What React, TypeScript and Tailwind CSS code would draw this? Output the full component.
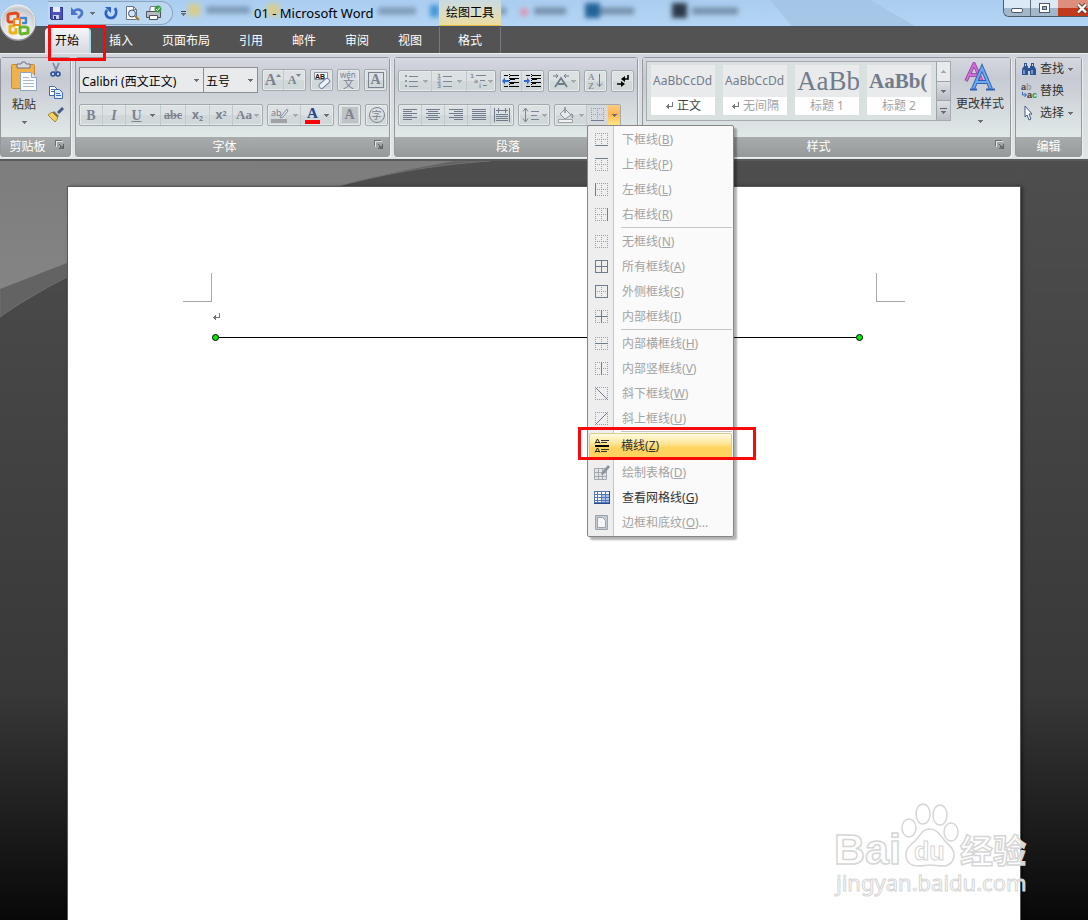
import type { ReactNode } from 'react'
import clsx from 'clsx'

type IconProps = { children: ReactNode; w?: number; h?: number }

function Icon({ children, w = 16, h = 16 }: IconProps) {
  return (
    <svg
      width={w}
      height={h}
      viewBox={`0 0 ${w} ${h}`}
      fill="none"
      shapeRendering="crispEdges"
      className="shrink-0"
      aria-hidden="true"
    >
      {children}
    </svg>
  )
}

function Caret({ light = false }: { light?: boolean }) {
  return (
    <Icon w={5} h={3}>
      <path d="M0 0h5v1H4v1H3v1H2V2H1V1H0z" fill={light ? '#a4a9ad' : '#6b6f74'} />
    </Icon>
  )
}

/* ---------- title bar ---------- */

function OfficeButton() {
  return (
    <button aria-label="Office" className="absolute left-0 top-1 z-10 cursor-pointer">
      <svg width="38" height="38" viewBox="0 0 38 38" fill="none">
        <defs>
          <radialGradient id="orb" cx="0.5" cy="0.75" r="0.8">
            <stop offset="0" stopColor="#ffffff" />
            <stop offset="0.5" stopColor="#e2e4e6" />
            <stop offset="0.8" stopColor="#c3c6ca" />
            <stop offset="1" stopColor="#f4f5f6" />
          </radialGradient>
        </defs>
        <circle cx="18" cy="19" r="18" fill="#8d9196" />
        <circle cx="18" cy="18" r="17" fill="url(#orb)" stroke="#f5f6f7" />
        <g strokeLinejoin="round">
          <path d="M18 14v-4l-2-1-7 1-1 1v6l1 1h4" stroke="#e04a1c" strokeWidth="3" />
          <path d="M20 14h6v5h-4" stroke="#3f86d8" strokeWidth="2.400" />
          <path d="M15 22h-5v6l1 1h5v-5" stroke="#eeb21a" strokeWidth="3" />
          <path d="M20 23h6l2 1v5l-7 1-1-1z" stroke="#69b52c" strokeWidth="3" />
          <path d="M14 15h6v6h-6z" stroke="#f08a1f" strokeWidth="2" />
        </g>
      </svg>
    </button>
  )
}

// Blurred remains of the window that lies behind the glass title bar
function GlassBackdrop() {
  return (
    <svg className="absolute inset-0 h-full w-full" aria-hidden="true">
      <defs>
        <filter id="glass" x="-20%" y="-60%" width="140%" height="220%">
          <feGaussianBlur stdDeviation="2.6" />
        </filter>
      </defs>
      <path d="M770 0h100l45 26H792z" fill="#9fc0de" opacity="0.65" />
      <g filter="url(#glass)">
        <rect x="188" y="4" width="12" height="12" fill="#d8cd8a" />
        <path d="M206 10h44M378 11h38" stroke="#5d7690" strokeWidth="7" opacity="0.6" />
        <rect x="267" y="4" width="12" height="12" fill="#d8cd8a" />
        <rect x="430" y="5" width="9" height="12" fill="#3f95d6" />
        <path d="M500 11h6M534 11h32M594 11h40M692 11h46" stroke="#4d657e" strokeWidth="7" opacity="0.6" />
        <circle cx="524" cy="12" r="4" fill="#dd93ad" />
        <rect x="585" y="3" width="15" height="15" fill="#20639a" />
        <rect x="672" y="3" width="15" height="15" fill="#2c3946" />
      </g>
    </svg>
  )
}

function SaveIcon() {
  return (
    <Icon>
      <path d="M2 2h12v12H3l-1-1z" fill="#4a53b8" stroke="#30378f" />
      <path d="M5 2h7v5H5z" fill="#e8edf9" />
      <path d="M5 10h6v4H5z" fill="#c9d0ec" />
      <path d="M6 11h2v3H6z" fill="#30378f" />
    </Icon>
  )
}

function QuickAccess() {
  return (
    <div className="relative flex w-[254px] items-center pl-12">
      <div className="flex h-6 w-[125px] items-center rounded-r-full border border-l-0 border-[#8fa3b8] bg-[#c5dcf2]/60">
        <button aria-label="保存" className="cursor-pointer">
          <SaveIcon />
        </button>
        <button aria-label="撤消" className="ml-1 cursor-pointer">
          <svg width="18" height="16" viewBox="0 0 18 16" fill="none">
            <path d="M6 6c4-3 8-1 8 2 0 3-3 4-4 5" stroke="#4a74c9" strokeWidth="2.600" />
            <path d="M3 2v8h7z" fill="#4a74c9" />
          </svg>
        </button>
        <button aria-label="撤消选项" className="ml-1 cursor-pointer">
          <Caret />
        </button>
        <button aria-label="恢复" className="ml-2 cursor-pointer">
          <svg width="16" height="16" viewBox="0 0 16 16" fill="none">
            <path d="M12 3c3 5 0 10-4 10s-7-4-4-8" stroke="#2f64c4" strokeWidth="2.600" />
            <path d="M2 2h6v6z" fill="#2f64c4" />
          </svg>
        </button>
        <button aria-label="打印预览" className="ml-1 cursor-pointer">
          <svg width="18" height="16" viewBox="0 0 18 16" fill="none">
            <path d="M3.500 1.500h7l3 3v10h-10z" fill="#fff" stroke="#66748a" />
            <path d="M10.500 1.500v3h3" stroke="#66748a" />
            <circle cx="9" cy="8.500" r="3.500" fill="#cfe4f7" stroke="#3d4d66" />
            <path d="M12 11l4 4" stroke="#a8772f" strokeWidth="2" />
          </svg>
        </button>
        <button aria-label="快速打印" className="ml-1 cursor-pointer">
          <svg width="18" height="16" viewBox="0 0 18 16" fill="none">
            <path d="M5.500 1.500h8l-1 5h-8z" fill="#fff" stroke="#777" />
            <path d="M1.500 6.500h14v6h-14z" fill="#b9bdc4" stroke="#4d525b" />
            <path d="M4.500 10.500h8v4h-8z" fill="#fff" stroke="#4d525b" />
            <circle cx="13" cy="4" r="3.500" fill="#3c9f45" />
            <path d="M11 4l1.500 1.500L15 2.500" stroke="#fff" />
          </svg>
        </button>
      </div>
      <button aria-label="自定义快速访问工具栏" className="ml-2 flex cursor-pointer flex-col items-center gap-px">
        <span className="h-px w-[5px] bg-[#3b4450]" />
        <Caret />
      </button>
    </div>
  )
}

function WindowControls() {
  return (
    <div className="relative flex h-[17px] shrink-0 overflow-hidden rounded-bl-md border-b border-l border-[#4d5b6b]">
      <button
        aria-label="最小化"
        className="flex w-[27px] items-center justify-center border-r border-[#5c6d80] bg-linear-to-b from-[#dbe8f5] from-50% to-[#a3b7cb] to-50% cursor-pointer"
      >
        <span className="mt-1 h-[5px] w-3 rounded-xs border border-[#4c5866] bg-white" />
      </button>
      <button
        aria-label="最大化"
        className="flex w-[27px] items-center justify-center bg-linear-to-b from-[#dbe8f5] from-50% to-[#a3b7cb] to-50% cursor-pointer"
      >
        <Icon w={11} h={10}>
          <path d="M.5.5h10v9H.5z" fill="#fff" stroke="#4c5866" />
          <path d="M3.500 3.500h4v3h-4z" fill="#8fb5dc" stroke="#4c5866" />
        </Icon>
      </button>
      <button
        aria-label="关闭"
        className="flex w-[30px] items-center justify-end bg-linear-to-b from-[#dd8e7d] from-50% to-[#c23a1e] to-50% cursor-pointer"
      >
        <svg width="12" height="11" viewBox="0 0 12 11">
          <path d="M2 1.500l8 8M10 1.500l-8 8" stroke="#5b3a3a" strokeWidth="4" />
          <path d="M2 1.500l8 8M10 1.500l-8 8" stroke="#fff" strokeWidth="2.400" />
        </svg>
      </button>
    </div>
  )
}

function TitleBar() {
  return (
    <header className="relative flex h-[27px] border-b border-[#42536a] bg-linear-to-b from-[#aacdf0] to-[#b4d5f4]">
      <GlassBackdrop />
      <QuickAccess />
      <h1 className="relative w-[185px] text-[13px] leading-[26px] whitespace-nowrap text-black">
        01 - Microsoft Word
      </h1>
      <div className="relative w-[62px] border-b border-[#e3b93e] bg-linear-to-b from-[#c9dae3] to-[#ecdd9f] text-center text-[12px] leading-[26px] text-black">
        绘图工具
      </div>
      <div className="flex-1" />
      <WindowControls />
    </header>
  )
}

/* ---------- ribbon tabs ---------- */

const tabs = ['插入', '页面布局', '引用', '邮件', '审阅', '视图']

function RibbonTabs() {
  return (
    <nav className="flex h-[26px] items-end gap-px bg-[#535353] pl-[45px] text-[12px] leading-[25px] text-white">
      <div className="relative mr-[3px]">
        <button className="h-[25px] w-[46px] rounded-t-sm border-r-2 border-[#a5dfe6] bg-linear-to-b from-[#f4f6f7] to-[#d5d8e0] text-black cursor-pointer">
          开始
        </button>
        <span className="pointer-events-none absolute -top-[3px] left-[3px] z-20 h-[36px] w-[58px] border-[3px] border-[#f80a0a]" />
      </div>
      {tabs.map((tab) => (
        <button key={tab} className="h-[26px] px-[14px] cursor-pointer">
          {tab}
        </button>
      ))}
      <button className="ml-0.5 h-[26px] w-[62px] border-x border-[#76797f] cursor-pointer">格式</button>
    </nav>
  )
}

/* ---------- ribbon building blocks ---------- */

function Group({
  label,
  launcher = false,
  className,
  children
}: {
  label: string
  launcher?: boolean
  className?: string
  children: ReactNode
}) {
  return (
    <section
      className={clsx(
        'flex h-[100px] flex-col rounded-[3px] border border-[#94989d] shadow-[1px_1px_0_#eef1f1,-1px_0_0_#dfe3e5]',
        className
      )}
    >
      <div className="flex h-[79px] bg-linear-to-b from-[#d6d8e0] via-[#c6cad3] via-25% to-[#e1e9e8]">{children}</div>
      <div className="flex h-[19px] items-center bg-linear-to-b from-[#a9acac] to-[#979a9a]">
        <h2 className="flex-1 text-center text-[12px] leading-[18px] text-white">{label}</h2>
        {launcher && (
          <button aria-label={`${label}选项`} className="mr-1 mb-1 cursor-pointer">
            <Icon w={12} h={10}>
              <path d="M2.500 7V1.500H9" stroke="#e2e5e5" />
              <path d="M1.500 6V.5H8" stroke="#6b6f73" />
              <path d="M5 4l3 3M5 8.500h4.500V4" stroke="#5d6166" />
              <path d="M6 6h3v3H6z" fill="#6b6f73" />
            </Icon>
          </button>
        )}
      </div>
    </section>
  )
}

function Cluster({ children }: { children: ReactNode }) {
  return (
    <div className="flex h-[22px] divide-x divide-[#c3cacd] rounded-xs border border-[#a2aaae] bg-linear-to-b from-[#dce1e4] from-50% to-[#d0d8da] to-50% shadow-[inset_0_0_0_1px_#e6ecec]">
      {children}
    </div>
  )
}

function Tool({ label, className, children }: { label: string; className: string; children: ReactNode }) {
  return (
    <button
      aria-label={label}
      title={label}
      className={clsx('flex h-full shrink-0 items-center justify-center text-[#7b838f] cursor-pointer', className)}
    >
      {children}
    </button>
  )
}

const serif = "font-['Liberation_Serif',serif] font-bold"

/* ---------- clipboard ---------- */

function PasteIcon() {
  return (
    <svg width="28" height="32" viewBox="0 0 28 32" fill="none">
      <rect x="1.500" y="3.500" width="23" height="24" rx="1" fill="#eeb24c" stroke="#c98a2c" />
      <path d="M7 7V3h4l1-2h3l1 2h4v4z" fill="#d5d8de" stroke="#6f7480" />
      <path d="M10.500 11.500h11l5 5v13h-16z" fill="#fbfcff" stroke="#8fa3c4" />
      <path d="M21.500 11.500v5h5" fill="#dce5f4" stroke="#8fa3c4" />
      <path d="M13 19.500h11M13 22.500h11M13 25.500h11M13 16.500h6" stroke="#a7b7d4" />
    </svg>
  )
}

function ClipboardGroup() {
  return (
    <Group label="剪贴板" launcher className="w-[71px]">
      <button className="flex w-[46px] flex-col items-center pt-[3px] text-[12px] text-[#333] cursor-pointer">
        <PasteIcon />
        <span className="mt-1 leading-4">粘贴</span>
        <span className="mt-2">
          <Caret />
        </span>
      </button>
      <div className="flex flex-col gap-1 pt-1">
        <button aria-label="剪切" className="cursor-pointer">
          <svg width="18" height="18" viewBox="0 0 18 18" fill="none">
            <path d="M6 1l4 9M12 1L8 10" stroke="#7c8ba3" strokeWidth="1.800" />
            <circle cx="6" cy="12" r="2" stroke="#2b4f9b" strokeWidth="1.600" />
            <circle cx="11" cy="12" r="2" stroke="#2b4f9b" strokeWidth="1.600" />
          </svg>
        </button>
        <button aria-label="复制" className="cursor-pointer">
          <svg width="18" height="18" viewBox="0 0 18 18" fill="none">
            <path d="M2.500 2.500h5l3 3v6h-8z" fill="#fff" stroke="#3d6bb5" />
            <path d="M7.500 5.500h5l3 3v6h-8z" fill="#e2ecfb" stroke="#3d6bb5" />
            <path d="M9 9.500h4M9 11.500h5M4 5.500h3M4 7.500h3" stroke="#3d6bb5" />
          </svg>
        </button>
        <button aria-label="格式刷" className="cursor-pointer">
          <svg width="18" height="18" viewBox="0 0 18 18" fill="none">
            <path d="M16 2l-5 5" stroke="#4a5a86" strokeWidth="3" />
            <path d="M7 5l5 5-2 2-5-5z" fill="#7a6f55" />
            <path d="M5 6l6 6-3 4L1 9z" fill="#f0d264" stroke="#a98a2c" />
          </svg>
        </button>
      </div>
    </Group>
  )
}

/* ---------- font ---------- */

function Combo({ label, value, className }: { label: string; value: string; className: string }) {
  return (
    <div className={clsx('relative h-[26px] border border-[#8b8f93] bg-[#e9eaec]', className)}>
      <select
        aria-label={label}
        className="h-6 w-full appearance-none bg-transparent pl-0.5 text-[12px] leading-6 text-black outline-none"
      >
        <option>{value}</option>
      </select>
      <span className="pointer-events-none absolute inset-y-0 right-1 flex items-center">
        <Caret />
      </span>
    </div>
  )
}

function FontGroup() {
  return (
    <Group label="字体" launcher className="w-[315px]">
      <div className="flex flex-col gap-3 pt-2.5 pl-[3px]">
        <div className="flex h-[24px] items-center">
          <Combo label="字体" value="Calibri (西文正文)" className="w-[125px]" />
          <Combo label="字号" value="五号" className="w-[54px] border-l-0" />
          <div className="ml-1 flex gap-1">
            <Cluster>
              <Tool label="增大字体" className="w-[21px]">
                <span className={clsx(serif, 'text-[16px] leading-5')}>A</span>
                <svg width="5" height="12" viewBox="0 0 5 12">
                  <path d="M0 3h5L2.500 0z" fill="currentColor" />
                </svg>
              </Tool>
              <Tool label="缩小字体" className="w-[21px]">
                <span className={clsx(serif, 'text-[12px] leading-5')}>A</span>
                <svg width="5" height="12" viewBox="0 0 5 12">
                  <path d="M0 0h5L2.500 3z" fill="currentColor" />
                </svg>
              </Tool>
            </Cluster>
            <Cluster>
              <Tool label="清除格式" className="w-[21px]">
                <svg width="18" height="18" viewBox="0 0 18 18" fill="none">
                  <path d="M1.500 1.500h13v7h-13z" fill="#f6f8fb" stroke="#8b93a3" />
                  <text x="2" y="8" fontSize="7" fontWeight="700" fontFamily="Liberation Sans" fill="#111">
                    AB
                  </text>
                  <rect x="5" y="10" width="12" height="5" rx="2" transform="rotate(-42 11 12)" fill="#eef2fa" stroke="#6a7ea8" />
                </svg>
              </Tool>
            </Cluster>
            <Cluster>
              <Tool label="拼音指南" className="w-[21px]">
                <svg
                  width="19"
                  height="20"
                  viewBox="0 0 19 20"
                  fill="currentColor"
                  fontFamily="Noto Sans, Noto Sans CJK SC"
                  className="overflow-visible"
                >
                  <text x="1" y="8" fontSize="8">
                    wén
                  </text>
                  <text x="4" y="18" fontSize="11">
                    文
                  </text>
                </svg>
              </Tool>
            </Cluster>
            <Cluster>
              <Tool label="字符边框" className="w-[21px]">
                <span className={clsx(serif, 'h-4 w-4 border border-current text-center text-[14px] leading-[14px]')}>
                  A
                </span>
              </Tool>
            </Cluster>
          </div>
        </div>
        <div className="flex gap-1">
          <Cluster>
            <Tool label="加粗" className="w-[23px]">
              <span className={clsx(serif, 'text-[14px]')}>B</span>
            </Tool>
            <Tool label="倾斜" className="w-[23px]">
              <span className={clsx(serif, 'text-[14px] italic')}>I</span>
            </Tool>
            <Tool label="下划线" className="w-[35px] gap-2">
              <span className={clsx(serif, 'text-[14px] underline')}>U</span>
              <Caret />
            </Tool>
            <Tool label="删除线" className="w-[25px]">
              <span className={clsx(serif, 'text-[12px] line-through')}>abc</span>
            </Tool>
            <Tool label="下标" className="w-[24px]">
              <span className="text-[12px] font-bold">
                x<sub className="text-[7px]">2</sub>
              </span>
            </Tool>
            <Tool label="上标" className="w-[23px]">
              <span className="text-[12px] font-bold">
                x<sup className="text-[7px]">2</sup>
              </span>
            </Tool>
            <Tool label="更改大小写" className="w-[29px] gap-0.5">
              <span className={clsx(serif, 'text-[13px]')}>Aa</span>
              <Caret light />
            </Tool>
          </Cluster>
          <Cluster>
            <Tool label="突出显示" className="w-[33px] gap-1">
              <svg width="18" height="18" viewBox="0 0 18 18" fill="none">
                <text x="0" y="10" fontSize="9" fontFamily="Noto Sans" fill="currentColor">
                  ab
                </text>
                <path d="M16 3l-6 7-1 2 3-1 5-6z" fill="#e0e3e6" stroke="#8b93a0" />
                <path d="M0 13h16v4H0z" fill="#a0a3a6" />
              </svg>
              <Caret light />
            </Tool>
            <Tool label="字体颜色" className="w-[32px] gap-1">
              <span className={clsx(serif, 'border-b-4 border-[#f00] px-0.5 text-[15px] leading-[13px] text-[#27468a]')}>
                A
              </span>
              <Caret />
            </Tool>
          </Cluster>
          <Cluster>
            <Tool label="字符底纹" className="w-[21px]">
              <span className={clsx(serif, 'h-4 w-4 bg-[#bfc3c6] text-center text-[14px] leading-4')}>A</span>
            </Tool>
          </Cluster>
          <Cluster>
            <Tool label="带圈字符" className="w-[21px]">
              <span className="h-4 w-4 rounded-full border border-current text-center text-[10px] leading-[14px]">字</span>
            </Tool>
          </Cluster>
        </div>
      </div>
    </Group>
  )
}

/* ---------- border menu ---------- */

const grid = '#9aa0a8'
const ink = '#6f7b8f'

function BorderIcon({ lines, frame = true }: { lines?: string; frame?: boolean }) {
  return (
    <Icon>
      {frame && (
        <path d="M1 1.500h13M1 7.500h13M1 13.500h13M1.500 1v13M7.500 1v13M13.500 1v13" stroke={grid} strokeDasharray="1 1" />
      )}
      {lines && <path d={lines} stroke={ink} />}
    </Icon>
  )
}

// Only the outer box is dotted: a diagonal runs through the cell
function DiagonalIcon({ d }: { d: string }) {
  return (
    <svg width="16" height="16" viewBox="0 0 16 16" fill="none">
      <path
        d="M1 1.500h13M1 13.500h13M1.500 1v13M13.500 1v13"
        stroke={grid}
        strokeDasharray="1 1"
        shapeRendering="crispEdges"
      />
      <path d={d} stroke={ink} />
    </svg>
  )
}

function HorizontalLineIcon() {
  return (
    <svg width="16" height="16" viewBox="0 0 16 16" fill="none">
      <path d="M1 8h14" stroke="#000" strokeWidth="2" shapeRendering="crispEdges" />
      <path d="M7 2.500h8M7 4.500h6M7 11.500h8M7 13.500h6" stroke="#333" shapeRendering="crispEdges" />
      <path d="M1 5.500L3.500 1 6 5.500M2 4.500h3M1 14.500L3.500 10 6 14.500M2 13.500h3" stroke="#222" />
    </svg>
  )
}

function DrawTableIcon() {
  return (
    <svg width="18" height="18" viewBox="0 0 18 18" fill="none">
      <path d="M1.500 4.500h12v11h-12zM1.500 8.500h12M1.500 12.500h12M5.500 4.500v11M9.500 4.500v11" fill="#e3e5e7" stroke="#a2a8ae" />
      <path d="M15 1l2 2-6 7-3 1 1-3z" fill="#8d949c" />
    </svg>
  )
}

function GridlinesIcon() {
  return (
    <Icon w={18} h={18}>
      <path d="M1 2h16v12H1z" fill="#fff" />
      <path d="M8 5h8v8H8z" fill="#a9c5ec" />
      <path d="M1.500 2.500h15v11h-15zM1 5.500h15M1 8.500h15M1 11.500h15M4.500 2v12M8.500 2v12M12.500 2v12" stroke="#5378b5" />
      <path d="M1 14.500h16M16.500 2v13" stroke="#274b8c" />
    </Icon>
  )
}

function ShadingPageIcon() {
  return (
    <svg width="18" height="18" viewBox="0 0 18 18" fill="none">
      <path d="M2.500 1.500h12v14h-12z" fill="#c4cad1" stroke="#9ba3ad" />
      <path d="M4.500 3.500h5l3 3v7h-8z" fill="#f4f5f6" stroke="#9ba3ad" />
    </svg>
  )
}

type MenuItem = { text: string; accel: string; tail?: string; icon: ReactNode; enabled?: boolean; hot?: boolean }

const menuSections: MenuItem[][] = [
  [
    { text: '下框线', accel: 'B', icon: <BorderIcon lines="M1 13.500h13" /> },
    { text: '上框线', accel: 'P', icon: <BorderIcon lines="M1 1.500h13" /> },
    { text: '左框线', accel: 'L', icon: <BorderIcon lines="M1.500 1v13" /> },
    { text: '右框线', accel: 'R', icon: <BorderIcon lines="M13.500 1v13" /> }
  ],
  [
    { text: '无框线', accel: 'N', icon: <BorderIcon /> },
    {
      text: '所有框线',
      accel: 'A',
      icon: <BorderIcon frame={false} lines="M1.500 1.500h12v12h-12zM1 7.500h13M7.500 1v13" />
    },
    { text: '外侧框线', accel: 'S', icon: <BorderIcon lines="M1.500 1.500h12v12h-12z" /> },
    { text: '内部框线', accel: 'I', icon: <BorderIcon lines="M1 7.500h13M7.500 1v13" /> }
  ],
  [
    { text: '内部横框线', accel: 'H', icon: <BorderIcon lines="M1 7.500h13" /> },
    { text: '内部竖框线', accel: 'V', icon: <BorderIcon lines="M7.500 1v13" /> },
    { text: '斜下框线', accel: 'W', icon: <DiagonalIcon d="M1.500 1.500l12 12" /> },
    { text: '斜上框线', accel: 'U', icon: <DiagonalIcon d="M13.500 1.500l-12 12" /> }
  ],
  [{ text: '横线', accel: 'Z', icon: <HorizontalLineIcon />, enabled: true, hot: true }],
  [
    { text: '绘制表格', accel: 'D', icon: <DrawTableIcon /> },
    { text: '查看网格线', accel: 'G', icon: <GridlinesIcon />, enabled: true },
    { text: '边框和底纹', accel: 'O', tail: '...', icon: <ShadingPageIcon /> }
  ]
]

function BorderMenu() {
  return (
    <div
      role="menu"
      className="absolute top-full left-0 z-30 w-[147px] rounded-xs border border-[#868686] bg-[linear-gradient(to_right,#eeeeef_25px,#c5c5c5_25px,#c5c5c5_26px,#fafafa_26px)] p-px shadow-[3px_3px_2px_rgba(0,0,0,0.3)]"
    >
      {menuSections.map((items, i) => (
        <div key={i}>
          {i > 0 && (
            <div className="flex h-0.5">
              <span className="w-[32px]" />
              <span className="h-px flex-1 bg-[#c5c5c5]" />
            </div>
          )}
          {items.map((item) => (
            <div key={item.text} className="relative">
              <button
                role="menuitem"
                disabled={!item.enabled}
                className={clsx(
                  'flex h-[25px] w-full items-center text-left text-[12px] leading-[23px] whitespace-nowrap',
                  item.enabled ? 'text-[#333] cursor-pointer' : 'text-[#a3a3a3]',
                  item.hot &&
                    'rounded-xs border border-[#dccb8c] bg-linear-to-b from-[#fffbe0] via-[#ffe79a] via-40% to-[#ffd45e] to-60%'
                )}
              >
                <span className={clsx('flex justify-center', item.hot ? 'w-[23px]' : 'w-[25px]')}>{item.icon}</span>
                <span className="ml-2">
                  {item.text}(<u>{item.accel}</u>){item.tail}
                </span>
              </button>
              {item.hot && (
                <span className="pointer-events-none absolute -top-[6px] -left-[11px] h-[33px] w-[178px] border-[3px] border-[#f80a0a]" />
              )}
            </div>
          ))}
        </div>
      ))}
    </div>
  )
}

/* ---------- paragraph ---------- */

function AlignIcon({ d }: { d: string }) {
  return (
    <Icon>
      <path d={d} stroke="#6f7b8b" />
    </Icon>
  )
}

const alignments = [
  { label: '左对齐', d: 'M1 2.500h14M1 4.500h9M1 6.500h14M1 8.500h9M1 10.500h14M1 12.500h9' },
  { label: '居中', d: 'M1 2.500h14M3 4.500h10M1 6.500h14M3 8.500h10M1 10.500h14M3 12.500h10' },
  { label: '右对齐', d: 'M1 2.500h14M6 4.500h9M1 6.500h14M6 8.500h9M1 10.500h14M6 12.500h9' },
  { label: '两端对齐', d: 'M1 2.500h14M1 4.500h14M1 6.500h14M1 8.500h14M1 10.500h14M1 12.500h14' }
]

function IndentIcon({ flip }: { flip: boolean }) {
  return (
    <svg width="18" height="16" viewBox="0 0 18 16" fill="none">
      <path
        d="M2 2.500h4M8 2.500h9M8 5.500h9M8 6.500h5M8 9.500h9M8 10.500h4M2 13.500h4M8 13.500h9"
        stroke="#000"
        shapeRendering="crispEdges"
      />
      <path d="M7.500 1v14" stroke="#000" strokeDasharray="1 1" shapeRendering="crispEdges" />
      <path d={flip ? 'M6 8L3 4.500V7H0v2h3v2.500z' : 'M0 8l3-3.500V7h4v2H3v2.500z'} fill="#2f68cf" />
    </svg>
  )
}

function ParagraphGroup() {
  return (
    <Group label="段落" launcher className="w-[244px]">
      <div className="flex flex-col gap-3 pt-3 pl-[3px]">
        <div className="flex gap-1">
          <Cluster>
            <Tool label="项目符号" className="w-[33px] gap-1">
              <Icon>
                <path d="M2 2h2v2H2zM2 7h2v2H2zM2 12h2v2H2z" fill="#8b93a0" />
                <path d="M6 3.500h9M6 8.500h9M6 13.500h9" stroke="#7b8593" />
              </Icon>
              <Caret light />
            </Tool>
            <Tool label="编号" className="w-[35px] gap-1">
              <svg width="16" height="16" viewBox="0 0 16 16" fill="none">
                <g fontSize="6" fontFamily="DejaVu Sans" fontWeight="700" fill="#8b93a0">
                  <text x="0" y="5">1</text>
                  <text x="0" y="10">2</text>
                  <text x="0" y="15">3</text>
                </g>
                <path d="M6 3.500h9M6 8.500h9M6 13.500h9" stroke="#7b8593" shapeRendering="crispEdges" />
              </svg>
              <Caret light />
            </Tool>
            <Tool label="多级列表" className="w-[28px]">
              <svg width="18" height="16" viewBox="0 0 18 16" fill="none">
                <g fontSize="6" fontFamily="DejaVu Sans" fontWeight="700" fill="#8b93a0">
                  <text x="0" y="5">1</text>
                  <text x="4" y="10">a</text>
                  <text x="9" y="15">i</text>
                </g>
                <path d="M6 2.500h10M10 7.500h5M13 12.500h4" stroke="#7b8593" shapeRendering="crispEdges" />
              </svg>
              <Caret light />
            </Tool>
          </Cluster>
          <Cluster>
            <Tool label="减少缩进量" className="w-[21px]">
              <IndentIcon flip={false} />
            </Tool>
            <Tool label="增加缩进量" className="w-[21px]">
              <IndentIcon flip />
            </Tool>
          </Cluster>
          <Cluster>
            <Tool label="中文版式" className="w-[30px] gap-px">
              <svg width="18" height="16" viewBox="0 0 18 16" fill="none" stroke="#6f7b8b">
                <path d="M3 14l6-9 6 9M6 11h6" strokeWidth="1.800" />
                <path d="M1 3h5M4 1l2 2-2 2M17 3h-5M14 1l-2 2 2 2" />
              </svg>
              <Caret light />
            </Tool>
          </Cluster>
          <Cluster>
            <Tool label="排序" className="w-[21px]">
              <svg width="18" height="18" viewBox="0 0 18 18" fill="none">
                <g fontSize="9" fontFamily="Liberation Serif" fill="#8b93a0" fontWeight="700">
                  <text x="1" y="8">A</text>
                  <text x="1" y="17">Z</text>
                </g>
                <path d="M12.500 2v12M10 11.500l2.500 3 2.500-3" stroke="#6f7b8b" />
              </svg>
            </Tool>
          </Cluster>
          <Cluster>
            <Tool label="显示编辑标记" className="w-[21px]">
              <svg width="16" height="16" viewBox="0 0 16 16" fill="none">
                <path d="M13 2v4H8M2 11h6" stroke="#000" strokeWidth="1.600" />
                <path d="M6 6l4-3v6zM10 11L6 8v6z" fill="#000" />
              </svg>
            </Tool>
          </Cluster>
        </div>
        <div className="flex gap-1">
          <Cluster>
            {alignments.map((a) => (
              <Tool key={a.label} label={a.label} className="w-[23px]">
                <AlignIcon d={a.d} />
              </Tool>
            ))}
            <Tool label="分散对齐" className="w-[22px]">
              <Icon>
                <path
                  d="M.5 1v14M15.500 1v14M2 3.500h12M4.500 1v5M11.500 1v5M2 7.500h12M2 9.500h12M2 11.500h12M2 13.500h12"
                  stroke="#6f7b8b"
                />
              </Icon>
            </Tool>
          </Cluster>
          <Cluster>
            <Tool label="行距" className="w-[30px] gap-0.5">
              <svg width="18" height="16" viewBox="0 0 18 16" fill="none">
                <path d="M3.500 2v12M1 4.500L3.500 1 6 4.500M1 11.500L3.500 15 6 11.500" stroke="#7b8593" />
                <path d="M9 4.500h8M9 8.500h6M9 12.500h8" stroke="#7b8593" shapeRendering="crispEdges" />
              </svg>
              <Caret light />
            </Tool>
          </Cluster>
          <Cluster>
            <Tool label="底纹" className="w-[32px] gap-1">
              <svg width="18" height="18" viewBox="0 0 18 18" fill="none">
                <path d="M8 3l6 6-6 4-5-5z" fill="#e6e9ea" stroke="#8b93a0" />
                <path d="M8 1v6M14 8c2 1 2 3 1 4" stroke="#8b93a0" strokeWidth="1.600" />
                <path d="M1.500 13.500h14v3h-14z" fill="#f1f1f1" stroke="#a0a3a6" />
              </svg>
              <Caret light />
            </Tool>
            <div className="relative flex">
              <Tool label="边框" className="w-[21px] bg-[#d5d8dc]">
                <BorderIcon lines="M1 13.500h13" />
              </Tool>
              <Tool
                label="边框选项"
                className="w-[12px] bg-linear-to-b from-[#fbcb83] via-[#fdb550] via-45% to-[#ffe684]"
              >
                <Caret />
              </Tool>
              <BorderMenu />
            </div>
          </Cluster>
        </div>
      </div>
    </Group>
  )
}

/* ---------- styles ---------- */

const styles = [
  { name: '正文', mark: true, active: true, preview: 'AaBbCcDd', font: 'text-[12px]' },
  { name: '无间隔', mark: true, active: false, preview: 'AaBbCcDd', font: 'text-[12px]' },
  { name: '标题 1', mark: false, active: false, preview: 'AaBb', font: "font-['Liberation_Serif',serif] text-[27px]" },
  {
    name: '标题 2',
    mark: false,
    active: false,
    preview: 'AaBb(',
    font: "font-['Liberation_Serif',serif] font-bold text-[21px]"
  }
]

function ParagraphMark() {
  return (
    <Icon w={8} h={8}>
      <path d="M7.500 0v4.500H1M3.500 2v5M2.500 3v3" stroke="#777" />
    </Icon>
  )
}

function StylesGroup() {
  return (
    <Group label="样式" launcher className="flex-1">
      <div className="m-[3px] mb-0 flex h-[60px] flex-1 border border-[#a7abae] bg-[#d9e1e0]">
        <div className="flex flex-1 gap-2 px-1 pt-[3px]">
          {styles.map((s) => (
            <button key={s.name} className="flex h-[50px] w-[64px] shrink-0 flex-col bg-white cursor-pointer">
              <span
                className={clsx(
                  'h-8 w-full overflow-hidden bg-[#e9eaec] pl-0.5 text-left leading-8 whitespace-nowrap text-[#727c8b]',
                  s.font
                )}
              >
                {s.preview}
              </span>
              <span
                className={clsx(
                  'flex w-full items-center justify-center gap-1 text-[12px] leading-[18px]',
                  s.active ? 'text-[#444]' : 'text-[#a3a3a3]'
                )}
              >
                {s.mark && <ParagraphMark />}
                {s.name}
              </span>
            </button>
          ))}
        </div>
        <div className="flex w-[14px] flex-col divide-y divide-[#a0a4aa] border-l border-[#a0a4aa]">
          <button aria-label="上一行" className="flex flex-1 items-center justify-center bg-[#e8eaee] cursor-pointer">
            <span className="rotate-180">
              <Caret light />
            </span>
          </button>
          <button
            aria-label="下一行"
            className="flex flex-1 items-center justify-center bg-linear-to-b from-[#dcdfe4] to-[#b9bec6] cursor-pointer"
          >
            <Caret />
          </button>
          <button
            aria-label="其他"
            className="flex flex-1 flex-col items-center justify-center gap-0.5 bg-linear-to-b from-[#dcdfe4] to-[#b9bec6] cursor-pointer"
          >
            <span className="h-px w-[7px] bg-[#5d6166]" />
            <Caret />
          </button>
        </div>
      </div>
      <button className="mr-1 flex w-[52px] flex-col items-center pt-1 text-[12px] text-[#333] cursor-pointer">
        <svg width="32" height="30" viewBox="0 0 32 30" fill="none">
          <path d="M2 19L10 2l8 17M5 13h10" stroke="#8c3aa0" strokeWidth="3.500" />
          <path d="M2 19L10 2l8 17M5 13h10" stroke="#cf6fd6" strokeWidth="2" />
          <path d="M9 27L18 6l9 21M12 20h12" stroke="#2f62b5" strokeWidth="4" />
          <path d="M9 27L18 6l9 21M12 20h12" stroke="#6fa8ee" strokeWidth="2" />
          <path d="M6 27.500h7M22 27.500h9" stroke="#2f62b5" strokeWidth="2" />
        </svg>
        <span className="mt-1 leading-4 whitespace-nowrap">更改样式</span>
        <span className="mt-2">
          <Caret />
        </span>
      </button>
    </Group>
  )
}

/* ---------- editing ---------- */

function FindIcon() {
  return (
    <svg width="16" height="16" viewBox="0 0 16 16" fill="none">
      <path d="M3 2h3v3h1v9H1V8l2-3zM10 2h3v3l2 3v6H9V5h1z" fill="#2c5396" />
      <path d="M6 7h4v3H6z" fill="#2c5396" />
      <path d="M3 9v4M11 9v4M4.500 3v2M11.500 3v2" stroke="#c4d7f3" />
    </svg>
  )
}

function ReplaceIcon() {
  return (
    <svg width="16" height="16" viewBox="0 0 16 16" fill="none">
      <g fontSize="9" fontFamily="Liberation Sans" fontWeight="700">
        <text x="0" y="7" fill="#444">a</text>
        <text x="5" y="7" fill="#999">b</text>
        <text x="6" y="15" fill="#333">a</text>
        <text x="11" y="15" fill="#1e9a2c">c</text>
      </g>
      <path d="M1.500 9v3H5M3.500 10L5.500 12l-2 2" stroke="#2f62b5" />
    </svg>
  )
}

function SelectIcon() {
  return (
    <svg width="16" height="16" viewBox="0 0 16 16">
      <path d="M4 1l7 8H8l2 5-2 1-2-5-2 2z" fill="#fff" stroke="#42598a" />
    </svg>
  )
}

const editActions = [
  { label: '查找', icon: <FindIcon />, menu: true },
  { label: '替换', icon: <ReplaceIcon />, menu: false },
  { label: '选择', icon: <SelectIcon />, menu: true }
]

function EditGroup() {
  return (
    <Group label="编辑" className="w-[67px]">
      <div className="flex flex-col pl-[5px]">
        {editActions.map((a) => (
          <button key={a.label} className="flex h-[22px] items-center text-[12px] text-[#333] cursor-pointer">
            {a.icon}
            <span className="mr-1 ml-[3px]">{a.label}</span>
            {a.menu && <Caret />}
          </button>
        ))}
      </div>
    </Group>
  )
}

/* ---------- document ---------- */

function Backdrop() {
  return (
    <svg className="absolute top-0 left-0" width="500" height="160" viewBox="0 0 500 160" fill="none" aria-hidden="true">
      <defs>
        <linearGradient id="swoosh" x1="0" y1="0" x2="0" y2="1">
          <stop offset="0" stopColor="#7d7d7d" />
          <stop offset="1" stopColor="#848484" />
        </linearGradient>
      </defs>
      <path d="M0 0h490C430 4 380 14 335 26 230 50 130 78 67 116 40 130 15 145 0 156z" fill="#636363" stroke="#707070" />
      <path d="M0 0h455C410 8 370 16 335 26 230 50 120 80 67 102L0 128z" fill="url(#swoosh)" />
    </svg>
  )
}

function Watermark() {
  return (
    <svg
      className="absolute right-[56px] bottom-[20px]"
      width="200"
      height="98"
      viewBox="0 0 200 98"
      fill="#ffffff"
      fillOpacity="0.85"
      stroke="#d6d6d6"
      strokeWidth="1.500"
      fontWeight="700"
    >
      <text x="2" y="62" fontSize="43" fontFamily="Liberation Sans">
        Bai
      </text>
      <ellipse cx="77" cy="26" rx="7" ry="9" />
      <ellipse cx="91" cy="12" rx="7" ry="10" />
      <ellipse cx="108" cy="13" rx="7" ry="10" />
      <ellipse cx="119" cy="30" rx="7" ry="9" />
      <path d="M98 27c-8 0-10 7-15 12-6 5-10 9-9 15 1 8 7 10 12 10 5 0 7-1 12-1s8 1 13 1c6 0 11-4 11-11 0-6-4-9-9-14-5-6-8-12-15-12z" />
      <text x="82" y="58" fontSize="25" fontFamily="Liberation Sans" strokeWidth="1">
        du
      </text>
      <text x="128" y="61" fontSize="33" fontFamily="Noto Sans CJK SC">
        经验
      </text>
      <text x="4" y="89" fontSize="22" fontFamily="Noto Sans" fontWeight="400" strokeWidth="1">
        jingyan.baidu.com
      </text>
    </svg>
  )
}

function Handle() {
  return <span className="h-[7px] w-[7px] shrink-0 rounded-full border border-black bg-[#00f000]" />
}

function DocumentArea() {
  return (
    <main className="relative flex flex-1 bg-[linear-gradient(#4e4e4e,#383838_70%,#080808)] px-[68px] pt-[26px]">
      <Backdrop />
      <article className="relative flex-1 bg-white px-[115px] pt-[86px] shadow-[0_0_0_1px_#5a5a5a,2px_0_4px_rgba(0,0,0,0.6)]">
        <div className="flex justify-between">
          <span className="h-[29px] w-[29px] border-r border-b border-[#a9a9a9]" />
          <span className="h-[29px] w-[29px] border-b border-l border-[#a9a9a9]" />
        </div>
        <div className="mt-[11px] ml-[29px]">
          <ParagraphMark />
        </div>
        <div className="mt-[13px] mr-[42px] ml-[29px] flex items-center">
          <Handle />
          <span className="h-px flex-1 bg-black" />
          <Handle />
        </div>
      </article>
      <Watermark />
    </main>
  )
}

export default function App() {
  return (
    <div className="relative flex min-h-screen flex-col overflow-hidden bg-black font-['Noto_Sans','Noto_Sans_CJK_SC',sans-serif]">
      <TitleBar />
      <RibbonTabs />
      <OfficeButton />
      <div className="relative z-10 flex h-[108px] gap-1 border-t border-b-2 border-t-[#eceef0] border-b-[#5a5a5a] bg-linear-to-b from-[#d3d5dc] to-[#dfe6e5] pt-[3px] pr-1.5">
        <ClipboardGroup />
        <FontGroup />
        <ParagraphGroup />
        <StylesGroup />
        <EditGroup />
      </div>
      <DocumentArea />
    </div>
  )
}
